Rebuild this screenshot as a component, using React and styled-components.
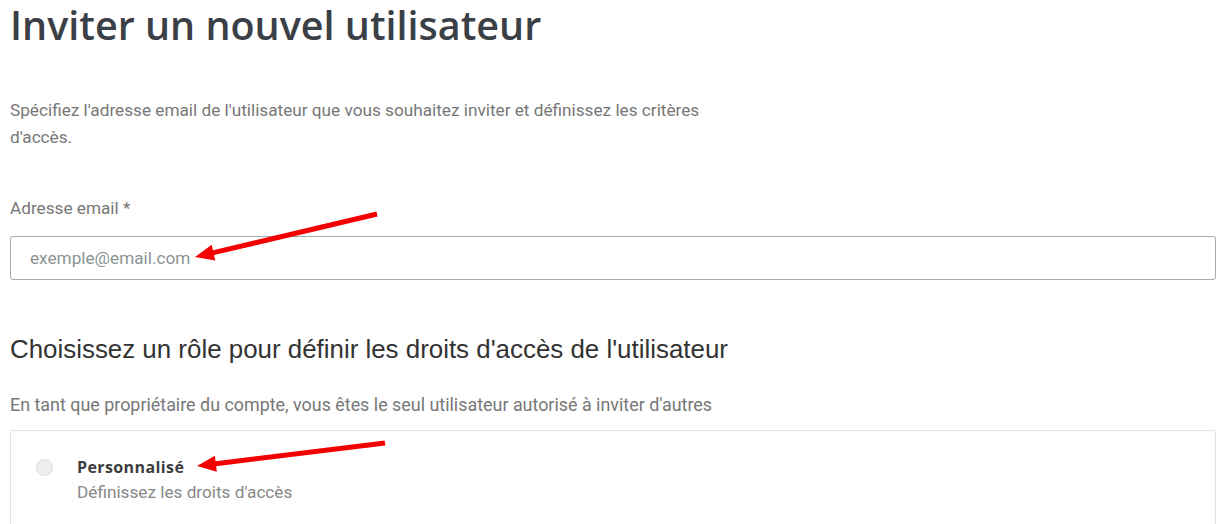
import React from "react";
import styled, { createGlobalStyle } from "styled-components";

const GlobalStyle = createGlobalStyle`
  html, body {
    margin: 0;
    padding: 0;
    background: #ffffff;
    overflow: hidden;
  }
  body {
    font-family: Roboto, "Liberation Sans", Arial, sans-serif;
  }
`;

const Page = styled.div`
  position: relative;
  width: 1224px;
  height: 524px;
  overflow: hidden;
  padding: 0 8px 0 10px;
  box-sizing: border-box;
`;

const Title = styled.h1`
  margin: 0;
  padding-top: 1px;
  font-family: "Open Sans", sans-serif;
  font-size: 39.5px;
  font-weight: 600;
  line-height: 48px;
  color: #3b4046;
`;

const Intro = styled.p`
  margin: 48px 0 0;
  width: 720px;
  font-size: 17.2px;
  line-height: 27px;
  color: #777;
`;

const Label = styled.label`
  display: block;
  margin-top: 47px;
  font-size: 17.2px;
  line-height: 20px;
  color: #777;
`;

const Input = styled.input`
  display: block;
  box-sizing: border-box;
  width: 100%;
  height: 44px;
  margin-top: 18px;
  padding: 0 19px;
  border: 1px solid #a3abac;
  border-radius: 3px;
  font-family: Roboto, sans-serif;
  font-size: 17.2px;
  color: #333;
  outline: none;

  &::placeholder {
    color: #8b9395;
  }
`;

const Heading = styled.h2`
  margin: 53px 0 0;
  font-family: "Liberation Sans", Arial, sans-serif;
  font-size: 25.9px;
  font-weight: 400;
  line-height: 32px;
  color: #333;
`;

const Note = styled.p`
  margin: 29px 0 0;
  font-size: 17.9px;
  line-height: 22px;
  color: #777;
`;

const RoleCard = styled.div`
  display: flex;
  align-items: flex-start;
  gap: 24px;
  margin-top: 14px;
  padding: 25px 0 80px 25px;
  border: 1px solid #e4e4e4;
  border-radius: 2px;
`;

const Radio = styled.span`
  flex: none;
  width: 17px;
  height: 17px;
  margin-top: 3px;
  border-radius: 50%;
  background: #efefef;
  border: 1px solid #dedede;
  box-sizing: border-box;
`;

const RoleText = styled.div`
  display: flex;
  flex-direction: column;
  gap: 4px;
`;

const RoleName = styled.span`
  font-family: "Open Sans", sans-serif;
  font-size: 16px;
  font-weight: 700;
  letter-spacing: 0.4px;
  line-height: 22px;
  color: #3d3d3d;
`;

const RoleDesc = styled.span`
  font-size: 17.2px;
  line-height: 20px;
  color: #888;
`;

const Overlay = styled.svg`
  position: absolute;
  left: 0;
  top: 0;
  pointer-events: none;
`;

const Arrow = ({ x1, y1, x2, y2 }) => {
  const dx = x2 - x1;
  const dy = y2 - y1;
  const len = Math.hypot(dx, dy);
  const ux = dx / len;
  const uy = dy / len;
  const head = 19;
  const half = 8;
  const bx = x2 - ux * head;
  const by = y2 - uy * head;
  const px = -uy * half;
  const py = ux * half;
  return (
    <g>
      <line x1={x1} y1={y1} x2={bx + ux * 2} y2={by + uy * 2} stroke="#f40000" strokeWidth="5" />
      <polygon points={`${x2},${y2} ${bx + px},${by + py} ${bx - px},${by - py}`} fill="#f40000" />
    </g>
  );
};

export default function App() {
  return (
    <Page>
      <GlobalStyle />
      <Title>Inviter un nouvel utilisateur</Title>
      <Intro>
        Spécifiez l'adresse email de l'utilisateur que vous souhaitez inviter et définissez les critères d'accès.
      </Intro>
      <Label htmlFor="email">Adresse email *</Label>
      <Input id="email" type="email" placeholder="exemple@email.com" />
      <Heading>Choisissez un rôle pour définir les droits d'accès de l'utilisateur</Heading>
      <Note>En tant que propriétaire du compte, vous êtes le seul utilisateur autorisé à inviter d'autres</Note>
      <RoleCard>
        <Radio />
        <RoleText>
          <RoleName>Personnalisé</RoleName>
          <RoleDesc>Définissez les droits d'accès</RoleDesc>
        </RoleText>
      </RoleCard>
      <Overlay width="1224" height="524">
        <Arrow x1={377} y1={214} x2={195} y2={257} />
        <Arrow x1={385} y1={443} x2={197} y2={466} />
      </Overlay>
    </Page>
  );
}
